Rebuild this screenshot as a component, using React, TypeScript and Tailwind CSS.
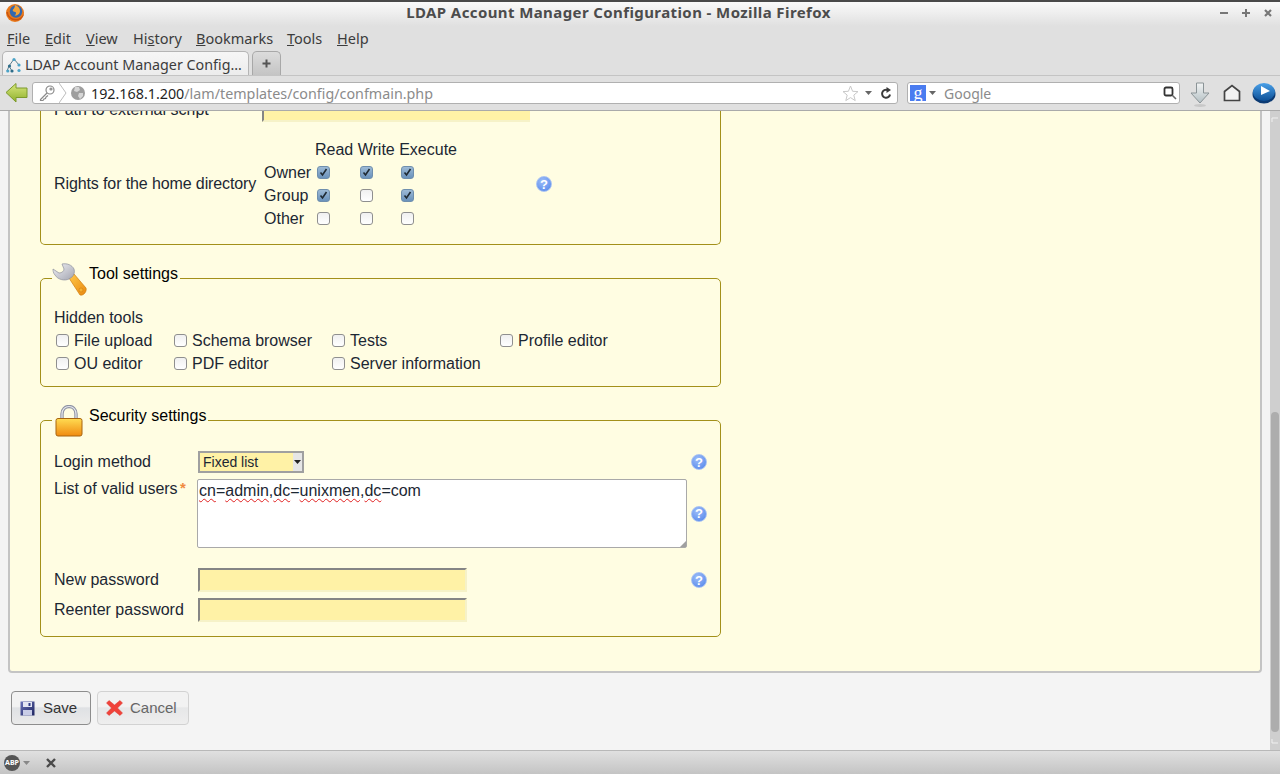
import React from "react";

const ui = "font-['Noto_Sans',sans-serif]";

function Firefox() {
  return (
    <svg width="20" height="20" viewBox="0 0 20 20">
      <circle cx="10" cy="10" r="9" fill="#e8791c" />
      <circle cx="11" cy="8.5" r="6.2" fill="#3268b0" />
      <path d="M10 2 C13 3 15 5 15 8 C15 11 12 13 9.5 12.5 C11 11.5 11.5 10 10.5 9 C8.5 9 7 8 8 6.5 C9 5.5 10 4 10 2Z" fill="#f2a33a" />
      <path d="M1.5 9 C2 15 8 19 14 17 C16.5 16 18.5 13.5 19 10.5 C17 15 12 17 8 15.5 C5 14.5 3 12 3 9 Z" fill="#c9530f" />
    </svg>
  );
}

function Tree() {
  return (
    <svg width="16" height="16" viewBox="0 0 16 16" fill="none">
      <path d="M8 2 L3 9 L1 14 M3 9 L6 14 M8 2 L13 8 M8 8 L8 8" stroke="#5d7d8c" strokeWidth="1" />
      <circle cx="8" cy="2.5" r="1.6" fill="#4ba3c7" />
      <circle cx="3.5" cy="9" r="1.6" fill="#2d6d8a" />
      <circle cx="13" cy="8" r="1.6" fill="#4ba3c7" />
      <circle cx="1.8" cy="14" r="1.6" fill="#4ba3c7" />
      <circle cx="6" cy="14" r="1.6" fill="#2d6d8a" />
      <circle cx="13" cy="13.5" r="1.6" fill="#4ba3c7" />
    </svg>
  );
}

function Back() {
  return (
    <svg width="24" height="24" viewBox="0 0 24 24">
      <defs>
        <linearGradient id="bk" x1="0" y1="0" x2="0" y2="1">
          <stop offset="0" stopColor="#d9e87f" />
          <stop offset="1" stopColor="#8fb02a" />
        </linearGradient>
      </defs>
      <path d="M1 11.5 L11 2.5 L11 7 L22 7 L22 16.5 L11 16.5 L11 21 Z" fill="url(#bk)" stroke="#7c9a2c" strokeWidth="1" />
    </svg>
  );
}

function Key() {
  return (
    <svg width="18" height="18" viewBox="0 0 18 18" fill="none" stroke="#8a8a8a" strokeWidth="1.2">
      <circle cx="12" cy="6" r="4" fill="#ffffff" />
      <circle cx="13" cy="5" r="1" />
      <path d="M9 9 L2.5 15.5 L2.5 16.5 L5 16.5 L6 15 L7.5 14.5 L8 13 L10 11.5" />
    </svg>
  );
}

function Globe() {
  return (
    <svg width="16" height="16" viewBox="0 0 16 16">
      <circle cx="8" cy="8" r="7" fill="#9e9e9e" />
      <path d="M5 2 L9 2 L10 5 L7 7 L4 6 Z M9 8 L13 8 L13 11 L10 14 L8 11 Z" fill="#d6d6d6" />
    </svg>
  );
}

function Star() {
  return (
    <svg width="17" height="17" viewBox="0 0 17 17">
      <path d="M8.5 1 L10.6 6.3 L16 6.6 L11.8 10.1 L13.2 15.6 L8.5 12.6 L3.8 15.6 L5.2 10.1 L1 6.6 L6.4 6.3 Z" fill="#ffffff" stroke="#c9c9c9" strokeWidth="1" />
    </svg>
  );
}

function Reload() {
  return (
    <svg width="12" height="13" viewBox="0 0 12 13" fill="none">
      <path d="M10 7.5 A4 4 0 1 1 7.5 3" stroke="#3a3a3a" strokeWidth="2" />
      <path d="M6.5 0 L11 3 L6.5 6 Z" fill="#3a3a3a" />
    </svg>
  );
}

function Caret({ color = "#666" }: { color?: string }) {
  return (
    <svg width="7" height="4" viewBox="0 0 7 4">
      <path d="M0 0 L7 0 L3.5 4 Z" fill={color} />
    </svg>
  );
}

function SearchGlass() {
  return (
    <svg width="14" height="14" viewBox="0 0 14 14" fill="none" stroke="#333">
      <rect x="1.5" y="1.5" width="8" height="8" rx="1.5" strokeWidth="1.8" />
      <path d="M9.5 9.5 L13 13" strokeWidth="1.6" stroke="#666" />
    </svg>
  );
}

function Download() {
  return (
    <svg width="20" height="26" viewBox="0 0 20 26">
      <defs>
        <linearGradient id="dl" x1="0" y1="0" x2="0" y2="1">
          <stop offset="0" stopColor="#f2f4f4" />
          <stop offset="1" stopColor="#b4c0c4" />
        </linearGradient>
      </defs>
      <path d="M6.5 1 L13.5 1 L13.5 11 L19 11 L10 21 L1 11 L6.5 11 Z" fill="url(#dl)" stroke="#8b9497" />
      <ellipse cx="10" cy="23.5" rx="6" ry="1.5" fill="#c8c8c8" />
    </svg>
  );
}

function Home() {
  return (
    <svg width="18" height="18" viewBox="0 0 18 18" fill="none">
      <path d="M1.5 16.5 L1.5 7.5 L9 1.5 L16.5 7.5 L16.5 16.5 Z" stroke="#444" strokeWidth="1.7" fill="#f2f2f2" />
    </svg>
  );
}

function BlueBtn() {
  return (
    <svg width="24" height="22" viewBox="0 0 24 22">
      <defs>
        <linearGradient id="bb" x1="0" y1="0" x2="0" y2="1">
          <stop offset="0" stopColor="#4aa0e8" />
          <stop offset="1" stopColor="#0d4f96" />
        </linearGradient>
      </defs>
      <ellipse cx="12" cy="12" rx="11.5" ry="9.5" fill="#0b3a73" />
      <ellipse cx="12" cy="10" rx="11" ry="9" fill="url(#bb)" />
      <path d="M9 4 L18 9 L9 13 Z" fill="#ffffff" />
    </svg>
  );
}

function Help() {
  return (
    <span className="flex h-4 w-4 items-center justify-center rounded-full border border-[#a9c3f2] bg-[radial-gradient(circle_at_40%_30%,#9dbdf8,#4f83ea)] font-['Liberation_Sans',sans-serif] text-[13px] font-bold leading-none text-white">
      ?
    </span>
  );
}

function Check({ on = false }: { on?: boolean }) {
  return (
    <span
      className={
        on
          ? "flex h-[13px] w-[13px] shrink-0 items-center justify-center rounded-[3px] border border-[#6f8fae] bg-[linear-gradient(#9dbad6,#6a92bb)]"
          : "block h-[13px] w-[13px] shrink-0 rounded-[3px] border border-[#8f8f8f] bg-[linear-gradient(#f0f0f0,#ffffff)]"
      }
    >
      {on && (
        <svg width="9" height="9" viewBox="0 0 9 9" fill="none">
          <path d="M1.5 4.5 L3.5 7 L7.5 1" stroke="#1f2a33" strokeWidth="1.6" />
        </svg>
      )}
    </span>
  );
}

function Wrench() {
  return (
    <svg width="35" height="34" viewBox="0 0 35 34">
      <defs>
        <linearGradient id="wr" x1="0" y1="0" x2="1" y2="1">
          <stop offset="0" stopColor="#ffc94a" />
          <stop offset="1" stopColor="#ea8a10" />
        </linearGradient>
        <linearGradient id="ws" x1="0" y1="0" x2="1" y2="1">
          <stop offset="0" stopColor="#f2f2f6" />
          <stop offset="1" stopColor="#a2a4b0" />
        </linearGradient>
      </defs>
      <path d="M17 15 L22 11 L34 25 C35 28 32 33 28 32 Z" fill="url(#wr)" stroke="#d07c10" strokeWidth="0.7" />
      <circle cx="29" cy="27" r="2" fill="#f6b030" stroke="#d07c10" strokeWidth="0.6" />
      <path d="M10 1 C15 0 20 2 22 6 C23 9 22 12 20 14 L17 16 C13 18 6 17 3 12 C1 10 1 7 1 6 L7 10 C10 10 12 8 12 6 Z" fill="url(#ws)" stroke="#8d8f9c" strokeWidth="0.7" />
    </svg>
  );
}

function Lock() {
  return (
    <svg width="28" height="32" viewBox="0 0 28 32">
      <defs>
        <linearGradient id="lk" x1="0" y1="0" x2="0" y2="1">
          <stop offset="0" stopColor="#ffdc52" />
          <stop offset="1" stopColor="#f08a10" />
        </linearGradient>
      </defs>
      <path d="M7 15 L7 9 C7 -1 21 -1 21 9 L21 15" fill="none" stroke="#8f93a3" strokeWidth="3.4" />
      <path d="M7 15 L7 9 C7 -1 21 -1 21 9 L21 15" fill="none" stroke="#e6e8ee" strokeWidth="1.2" />
      <rect x="1" y="13.5" width="26" height="17.5" rx="2" fill="url(#lk)" stroke="#a8650f" />
    </svg>
  );
}

function Floppy() {
  return (
    <svg width="15" height="15" viewBox="0 0 15 15">
      <defs>
        <linearGradient id="fl" x1="0" y1="0" x2="1" y2="1">
          <stop offset="0" stopColor="#6a72b8" />
          <stop offset="1" stopColor="#1e2560" />
        </linearGradient>
      </defs>
      <rect x="0.5" y="0.5" width="14" height="14" fill="url(#fl)" />
      <rect x="3" y="1" width="9" height="5" fill="#e4e6f2" />
      <rect x="3" y="9" width="9" height="5.5" fill="#c8cce6" />
      <rect x="8.5" y="2" width="2" height="3" fill="#2f3a86" />
    </svg>
  );
}

function RedX() {
  return (
    <svg width="17" height="16" viewBox="0 0 17 16">
      <path d="M3 0.5 L8.5 5 L14 0.5 L16.5 3 L11.5 8 L16.5 13 L14 15.5 L8.5 11 L3 15.5 L0.5 13 L5.5 8 L0.5 3 Z" fill="#f0423a" stroke="#d83a30" strokeWidth="0.5" />
    </svg>
  );
}

function Fieldset({
  icon,
  title,
  children,
}: {
  icon: React.ReactNode;
  title: string;
  children: React.ReactNode;
}) {
  return (
    <fieldset className="mx-[30px] w-[681px] rounded-[5px] border border-[#a3901a] pl-[13px]">
      <legend className="-ml-[2px] flex h-[30px] items-start pr-[2px]">
        {icon}
        <span className="pt-[1px] leading-5 text-black">{title}</span>
      </legend>
      {children}
    </fieldset>
  );
}

function Row({ label, on }: { label: string; on: boolean[] }) {
  return (
    <>
      <span className="leading-[23px]">{label}</span>
      {on.map((v, i) => (
        <span key={i} className="flex h-[23px] items-center">
          <Check on={v} />
        </span>
      ))}
    </>
  );
}

function Tool({ label, w }: { label: string; w: string }) {
  return (
    <label className={"flex h-[23px] items-center gap-[5px] " + w}>
      <Check />
      <span>{label}</span>
    </label>
  );
}

function Wavy({ children }: { children: string }) {
  return <span className="underline decoration-[#e02020] decoration-wavy decoration-1 underline-offset-2">{children}</span>;
}

function Input() {
  return <div className="h-[24px] w-[269px] border-2 border-[#f6f2c8] border-t-[#858585] border-l-[#858585] bg-[#fff2a6]" />;
}

export default function App() {
  return (
    <div className="flex h-[774px] w-[1280px] flex-col overflow-hidden bg-[#f4f4f4] font-['Liberation_Sans',sans-serif] text-[16px] text-[#1c2733]">
      {/* title bar */}
      <div className={"relative flex h-[26px] shrink-0 items-center border-t-2 border-[#4a4a4a] bg-[linear-gradient(#fafafa,#e0e0e0)] pb-[3px] " + ui}>
        <span className="ml-[5px]"><Firefox /></span>
        <span className="ml-[381px] w-[425px] whitespace-nowrap text-center text-[15px] font-bold tracking-[0.4px] text-[#4c4c4c]">
          LDAP Account Manager Configuration - Mozilla Firefox
        </span>
        <div className="ml-auto mr-[7px] flex items-center gap-[12px] text-[#7a7a7a]">
          <svg width="10" height="10" viewBox="0 0 10 10"><path d="M1 5 H9" stroke="#777" strokeWidth="2" /></svg>
          <svg width="10" height="10" viewBox="0 0 10 10"><path d="M1 5 H9 M5 1 V9" stroke="#777" strokeWidth="2" /></svg>
          <svg width="10" height="10" viewBox="0 0 10 10"><path d="M2 2 L8 8 M8 2 L2 8" stroke="#777" strokeWidth="2.2" /></svg>
        </div>
      </div>
      {/* menu */}
      <div className={"flex h-[26px] shrink-0 items-center bg-[#e0e0e0] pl-[7px] text-[14.5px] text-[#3c3c3c] " + ui}>
        <span className="w-[38px]"><u>F</u>ile</span>
        <span className="w-[41px]"><u>E</u>dit</span>
        <span className="w-[47px]"><u>V</u>iew</span>
        <span className="w-[63px]">Hi<u>s</u>tory</span>
        <span className="w-[91px]"><u>B</u>ookmarks</span>
        <span className="w-[50px]"><u>T</u>ools</span>
        <span><u>H</u>elp</span>
      </div>
      {/* tabs */}
      <div className={"flex h-[24px] shrink-0 items-end border-b border-[#c4c4c4] bg-[#e0e0e0] pl-[2px] " + ui}>
        <div className="flex h-[24px] w-[247px] items-center gap-[3px] rounded-t-[5px] border border-b-0 border-[#b5b5b5] bg-[linear-gradient(#f6f6f6,#ececec)] pl-[3px] pt-[2px] text-[14.3px] text-[#3c3c3c]">
          <Tree />
          <span className="whitespace-nowrap">LDAP Account Manager Config…</span>
        </div>
        <div className="ml-[3px] flex h-[24px] w-[29px] items-center justify-center rounded-t-[5px] border border-b-0 border-[#a8a8a8] bg-[linear-gradient(#dcdcdc,#c4c4c4)]">
          <svg width="9" height="9" viewBox="0 0 9 9"><path d="M0.5 4.5 H8.5 M4.5 0.5 V8.5" stroke="#555" strokeWidth="2" /></svg>
        </div>
      </div>
      {/* nav bar */}
      <div className={"flex h-[35px] shrink-0 items-center border-b border-[#aaaaaa] bg-[#e0e0e0] pl-[5px] " + ui}>
        <Back />
        <div className="ml-[3px] flex h-[22px] w-[866px] items-center rounded-[3px] border border-[#b0b0b0] bg-white text-[14.3px]">
          <span className="flex h-full w-[27px] items-center justify-center rounded-l-[3px]"><Key /></span>
          <svg width="8" height="20" viewBox="0 0 8 20" fill="none" className="-ml-px"><path d="M0 0 L7 10 L0 20" stroke="#bdbdbd" /></svg>
          <span className="ml-[3px]"><Globe /></span>
          <span className="ml-[5px] mt-[1px] whitespace-nowrap text-[#1f1f1f]">192.168.1.200<span className="text-[#8b8b8b]">/lam/templates/config/confmain.php</span></span>
          <span className="ml-auto"><Star /></span>
          <span className="ml-[6px]"><Caret /></span>
          <span className="ml-[8px] mr-[5px]"><Reload /></span>
        </div>
        <div className="ml-[9px] flex h-[22px] w-[273px] items-center rounded-[3px] border border-[#b0b0b0] bg-white text-[14px] text-[#8b8b8b]">
          <span className="ml-[2px] flex h-[16px] w-[16px] items-center justify-center bg-[#4a7cf0] font-['Liberation_Serif',serif] text-[18px] leading-[14px] text-white">g</span>
          <span className="ml-[3px]"><Caret /></span>
          <span className="ml-[8px]">Google</span>
          <span className="ml-auto mr-[2px]"><SearchGlass /></span>
        </div>
        <span className="ml-[10px] mt-[4px]"><Download /></span>
        <span className="ml-[13px]"><Home /></span>
        <span className="ml-[11px]"><BlueBtn /></span>
      </div>
      {/* content */}
      <div className="flex min-h-0 flex-1 overflow-hidden">
        <div className="min-w-0 flex-1 overflow-hidden px-[8px]">
          <div className="-mt-[40px] h-[602px] w-[1254px] rounded-b-[4px] border-r-2 border-b-2 border-l-2 border-[#c4c4c4] bg-[#fffde2]">
            {/* File section */}
            <div className="mx-[30px] w-[681px] rounded-b-[5px] border border-t-0 border-[#a3901a] pl-[13px]">
              <div className="flex h-[51px] items-end">
                <span className="mb-[3px] w-[208px] leading-[18px]">Path to external script</span>
                <span className="h-[11px] w-[268px] self-end border-b-2 border-l-2 border-b-[#f6f2c8] border-l-[#858585] bg-[#fff2a6]" />
              </div>
              <div className="mt-[16px] flex items-center">
                <span className="w-[210px] tracking-[-0.11px]">Rights for the home directory</span>
                <div className="grid grid-cols-[53px_43px_41px_58px] items-center">
                  <span />
                  <span className="col-span-3 -ml-[2px] h-[23px] leading-[23px]">Read Write Execute</span>
                  <Row label="Owner" on={[true, true, true]} />
                  <Row label="Group" on={[true, false, true]} />
                  <Row label="Other" on={[false, false, false]} />
                </div>
                <span className="ml-[77px]"><Help /></span>
              </div>
              <div className="h-[14px]" />
            </div>

            <div className="h-[18px]" />
            <Fieldset icon={<span className="mr-[2px]"><Wrench /></span>} title="Tool settings">
              <div className="mt-[13px] leading-[23px]">Hidden tools</div>
              <div className="flex pl-[2px]"><Tool label="File upload" w="w-[118px]" /><Tool label="Schema browser" w="w-[158px]" /><Tool label="Tests" w="w-[168px]" /><Tool label="Profile editor" w="" /></div>
              <div className="flex pl-[2px]"><Tool label="OU editor" w="w-[118px]" /><Tool label="PDF editor" w="w-[158px]" /><Tool label="Server information" w="" /></div>
              <div className="h-[11px]" />
            </Fieldset>

            <div className="h-[18px]" />
            <Fieldset icon={<span className="ml-[3px] mr-[6px]"><Lock /></span>} title="Security settings">
              <div className="mt-[15px] flex h-[24px] items-center">
                <span className="-mt-[1px] w-[144px]">Login method</span>
                <div className="flex h-[22px] w-[106px] items-center justify-between border-2 border-[#a0a0a0] bg-[#fff2a6] pl-[3px] text-[14px]">
                  <span>Fixed list</span>
                  <span className="flex h-full w-[9px] items-center justify-center bg-[#e6e6e6]"><Caret color="#222" /></span>
                </div>
                <span className="ml-[387px]"><Help /></span>
              </div>
              <div className="mt-[5px] flex items-center">
                <span className="relative w-[143px] self-start pt-[1px] leading-[18px]">
                  List of valid users<span className="absolute top-0 left-[126px] text-[15px] font-bold text-[#f08a40]">*</span>
                </span>
                <div className="relative h-[69px] w-[490px] rounded-[2px] border border-[#a9a9a9] bg-white pl-[1px] pt-[2px] leading-[18px]">
                  <Wavy>cn</Wavy>=<Wavy>admin</Wavy>,<Wavy>dc</Wavy>=<Wavy>unixmen</Wavy>,<Wavy>dc</Wavy>=com
                  <svg width="6" height="6" viewBox="0 0 6 6" className="absolute bottom-0 right-0"><path d="M6 0 L6 6 L0 6 Z" fill="#a0a0a0" /></svg>
                </div>
                <span className="ml-[4px]"><Help /></span>
              </div>
              <div className="mt-[20px] flex h-[24px] items-center">
                <span className="w-[144px]">New password</span>
                <Input />
                <span className="ml-[224px]"><Help /></span>
              </div>
              <div className="mt-[6px] flex h-[24px] items-center">
                <span className="w-[144px]">Reenter password</span>
                <Input />
              </div>
              <div className="h-[14px]" />
            </Fieldset>
          </div>
          <div className="ml-[3px] mt-[18px] flex gap-[6px]">
            <button className="flex h-[34px] w-[80px] items-center rounded-[4px] border border-[#8d8d8d] bg-[linear-gradient(#f2f2f2_45%,#dfe1e4_50%,#eaeaea)] pl-[8px] text-[15px] text-[#333]">
              <Floppy /><span className="ml-[8px]">Save</span>
            </button>
            <button className="flex h-[34px] w-[92px] items-center rounded-[4px] border border-[#d2d2d2] bg-[linear-gradient(#f2f2f2_45%,#e6e7e8_50%,#eeeeee)] pl-[8px] text-[15px] text-[#666]">
              <RedX /><span className="ml-[7px]">Cancel</span>
            </button>
          </div>
        </div>
        {/* scrollbar */}
        <div className="flex w-[10px] shrink-0 flex-col bg-[#cfcfcf] px-[1px] pt-[6px]">
          <svg width="8" height="5" viewBox="0 0 8 5" fill="none"><path d="M1 5 V1 H7" stroke="#f0f0f0" /></svg>
          <div className="mt-[290px] h-[320px] rounded-[4px] bg-[#adadad]" />
          <svg width="8" height="5" viewBox="0 0 8 5" fill="none" className="mt-[7px]"><path d="M1 0 V4 H7" stroke="#f0f0f0" /></svg>
        </div>
      </div>
      {/* status bar */}
      <div className={"flex h-[24px] shrink-0 items-center border-t border-[#b8b8b8] bg-[linear-gradient(#e0e0e0,#c4c4c4)] pl-[4px] " + ui}>
        <span className="flex h-[16px] w-[16px] items-center justify-center rounded-full bg-[#555] text-[7px] font-bold leading-none text-white">ABP</span>
        <span className="ml-[3px]"><Caret color="#888" /></span>
        <svg width="10" height="10" viewBox="0 0 10 10" className="ml-[16px]"><path d="M1 1 L9 9 M9 1 L1 9" stroke="#4a4a4a" strokeWidth="2.4" /></svg>
      </div>
    </div>
  );
}
